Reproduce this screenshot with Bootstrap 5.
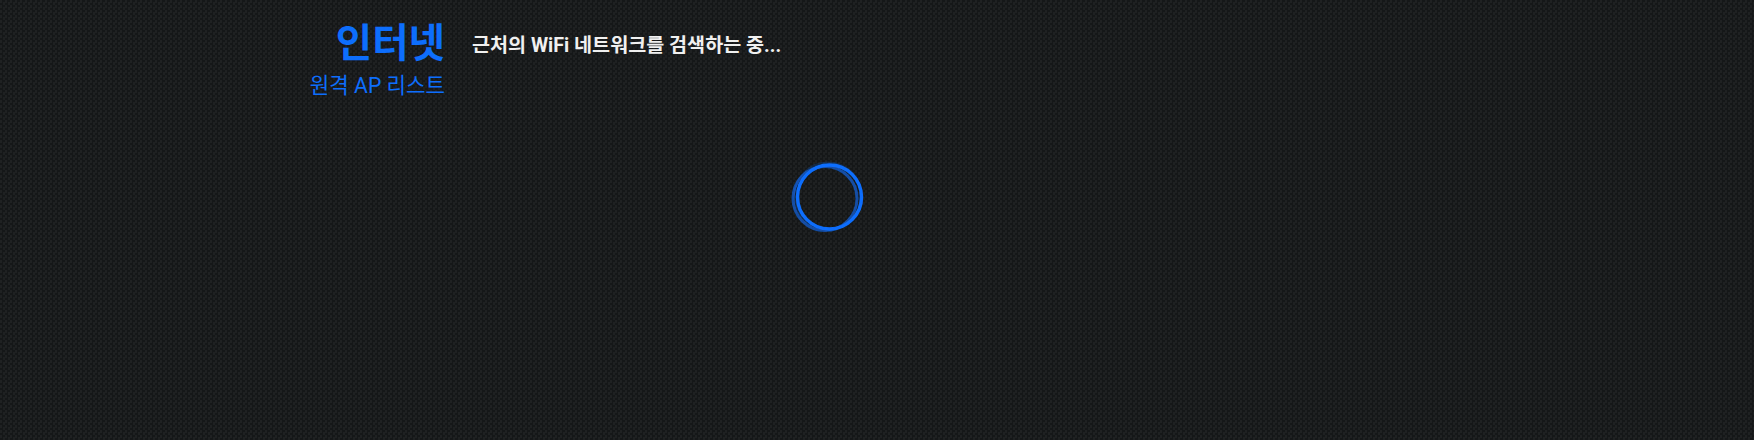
<!DOCTYPE html>
<html lang="ko"><head><meta charset="utf-8">
<link href="https://cdn.jsdelivr.net/npm/bootstrap@5.3.0/dist/css/bootstrap.min.css" rel="stylesheet">
<style>
html,body{height:100%}
body{background-color:#1a1c1d;background-image:repeating-conic-gradient(#151718 0 25%,#1f2122 0 50%);background-size:5px 5px;font-family:Roboto,"Noto Sans CJK KR",sans-serif;overflow:hidden}
.page-wrap{width:1320px;margin:0 auto;padding-top:16px}
.side-head{width:228px;text-align:right}
.side-title{font-size:39.6px;line-height:56px;font-weight:700;color:#0d6efd;margin:0}
.side-sub{display:block;font-size:21.2px;line-height:28px;color:#0d6efd;text-decoration:none}
.scan-text{font-size:19.6px;line-height:28px;font-weight:700;color:#f0f0f0;margin:16px 0 0 27px}
.loader{width:76px;height:76px;margin:60px 0 0 573px;display:block}
</style></head><body>
<div class="page-wrap">
<div class="d-flex align-items-start">
<div class="side-head"><h1 class="side-title">인터넷</h1><a class="side-sub" href="#">원격 AP 리스트</a></div>
<div class="scan-text">근처의 WiFi 네트워크를 검색하는 중...</div>
</div>
<svg class="loader" viewBox="0 0 76 76" fill="none" stroke="#0d6efd"><defs><filter id="soft"><feGaussianBlur stdDeviation=".5"/></filter></defs><g filter="url(#soft)"><circle cx="39.5" cy="37" r="32" stroke-width="3.5"/><circle cx="35" cy="38.5" r="32" stroke-width="3" opacity=".6"/><circle cx="38" cy="36" r="33.5" stroke-width="2" opacity=".2"/><path d="M66 20a32 32 0 0 1 5 24" stroke-width="2" opacity=".4"/></g></svg>
</div>
</body></html>
